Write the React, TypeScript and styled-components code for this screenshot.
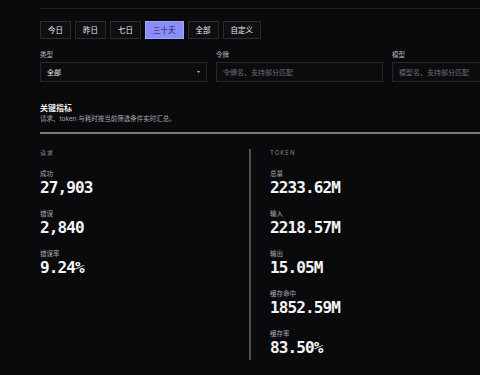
import React from "react";
import styled, { createGlobalStyle } from "styled-components";

const GlobalStyle = createGlobalStyle`
    html, body {
        margin: 0;
        padding: 0;
        background: #0a0a0d;
        overflow: hidden;
    }
    body {
        font-family: Inter, "Noto Sans CJK SC", sans-serif;
        color: #e8e8ea;
    }
`;

const Page = styled.div`
    width: 520px;
    padding-left: 40px;
`;

const TopRule = styled.div`
    height: 8px;
    border-bottom: 1px solid #1e1e22;
`;

const RangeBar = styled.div`
    display: flex;
    gap: 4px;
    margin-top: 12px;
`;

const RangeButton = styled.button<{ $active?: boolean }>`
    height: 18px;
    padding: 0 7px;
    border: 1px solid ${(p) => (p.$active ? "#a4a6ff" : "#2a2a2f")};
    background: ${(p) => (p.$active ? "#8b8dfb" : "#0f0f12")};
    color: ${(p) => (p.$active ? "#1c1d4a" : "#ececee")};
    font-family: "Noto Sans CJK SC", sans-serif;
    font-size: 7.5px;
    line-height: 16px;
    cursor: pointer;
`;

const Filters = styled.div`
    display: grid;
    grid-template-columns: repeat(3, 167px);
    column-gap: 9px;
    margin-top: 10px;
`;

const Field = styled.div`
    display: flex;
    flex-direction: column;
    gap: 3px;
`;

const FieldLabel = styled.div`
    font-family: "Noto Sans CJK SC", sans-serif;
    font-size: 6.5px;
    line-height: 10px;
    color: #b4b4b8;
`;

const InputBox = styled.div<{ $placeholder?: boolean }>`
    height: 20px;
    box-sizing: border-box;
    border: 1px solid #26262b;
    background: #0c0c0f;
    padding: 0 6px;
    display: flex;
    align-items: center;
    justify-content: space-between;
    font-family: "Noto Sans CJK SC", sans-serif;
    font-size: 7px;
    color: ${(p) => (p.$placeholder ? "#6e6e74" : "#ececee")};
`;

const Caret = () => (
    <svg width="3" height="2" viewBox="0 0 3 2">
        <path d="M0 0h3L1.5 2z" fill="#bdbdc2" />
    </svg>
);

const SectionHead = styled.div`
    margin-top: 20px;
    padding-bottom: 8px;
    border-bottom: 2px solid #7c7c80;
`;

const SectionTitle = styled.div`
    font-family: "Noto Sans CJK SC", sans-serif;
    font-weight: 700;
    font-size: 8px;
    line-height: 12px;
    color: #f2f2f4;
`;

const SectionSub = styled.div`
    font-family: Inter, "Noto Sans CJK SC", sans-serif;
    font-size: 6.5px;
    line-height: 10px;
    color: #a6a6ab;
`;

const Metrics = styled.div`
    display: grid;
    grid-template-columns: 209px 1fr;
    margin-top: 15px;
`;

const Column = styled.div<{ $divided?: boolean }>`
    padding-left: ${(p) => (p.$divided ? "19px" : "0")};
    border-left: ${(p) => (p.$divided ? "2px solid #4e4e53" : "none")};
    padding-bottom: 2px;
`;

const ColumnHead = styled.div`
    font-family: Inter, "Noto Sans CJK SC", sans-serif;
    font-size: 6px;
    line-height: 8px;
    letter-spacing: 1px;
    color: #86868b;
    margin-bottom: 12px;
`;

const Stat = styled.div`
    margin-bottom: 11px;
    &:last-child {
        margin-bottom: 0;
    }
`;

const StatLabel = styled.div`
    font-family: "Noto Sans CJK SC", sans-serif;
    font-size: 6.5px;
    line-height: 8px;
    color: #a8a8ad;
`;

const StatValue = styled.div`
    margin-top: 1px;
    font-family: "DejaVu Sans Mono", monospace;
    font-weight: 700;
    font-size: 16px;
    line-height: 20px;
    letter-spacing: -0.9px;
    color: #f4f4f6;
`;

const ranges = ["今日", "昨日", "七日", "三十天", "全部", "自定义"];

const requestStats = [
    { label: "成功", value: "27,903" },
    { label: "错误", value: "2,840" },
    { label: "错误率", value: "9.24%" },
];

const tokenStats = [
    { label: "总量", value: "2233.62M" },
    { label: "输入", value: "2218.57M" },
    { label: "输出", value: "15.05M" },
    { label: "缓存命中", value: "1852.59M" },
    { label: "缓存率", value: "83.50%" },
];

const App = () => {
    return (
        <>
            <GlobalStyle />
            <Page>
                <TopRule />
                <RangeBar>
                    {ranges.map((r) => (
                        <RangeButton key={r} $active={r === "三十天"}>
                            {r}
                        </RangeButton>
                    ))}
                </RangeBar>
                <Filters>
                    <Field>
                        <FieldLabel>类型</FieldLabel>
                        <InputBox>
                            全部
                            <Caret />
                        </InputBox>
                    </Field>
                    <Field>
                        <FieldLabel>令牌</FieldLabel>
                        <InputBox $placeholder>令牌名、支持部分匹配</InputBox>
                    </Field>
                    <Field>
                        <FieldLabel>模型</FieldLabel>
                        <InputBox $placeholder>模型名、支持部分匹配</InputBox>
                    </Field>
                </Filters>
                <SectionHead>
                    <SectionTitle>关键指标</SectionTitle>
                    <SectionSub>请求、token 与耗时按当前筛选条件实时汇总。</SectionSub>
                </SectionHead>
                <Metrics>
                    <Column>
                        <ColumnHead>请求</ColumnHead>
                        {requestStats.map((s) => (
                            <Stat key={s.label}>
                                <StatLabel>{s.label}</StatLabel>
                                <StatValue>{s.value}</StatValue>
                            </Stat>
                        ))}
                    </Column>
                    <Column $divided>
                        <ColumnHead>TOKEN</ColumnHead>
                        {tokenStats.map((s) => (
                            <Stat key={s.label}>
                                <StatLabel>{s.label}</StatLabel>
                                <StatValue>{s.value}</StatValue>
                            </Stat>
                        ))}
                    </Column>
                </Metrics>
            </Page>
        </>
    );
};

export default App;
